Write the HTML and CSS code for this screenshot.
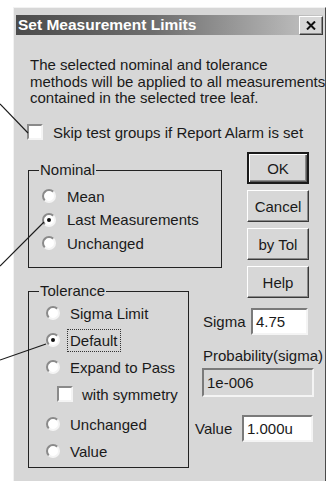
FILE: index.html
```html
<!DOCTYPE html>
<html lang="en">
	<head>
		<meta charset="UTF-8" />
		<meta name="viewport" content="width=device-width, initial-scale=1.0" />
		<title>Set Measurement Limits</title>
		<link rel="stylesheet" href="styles.css">
	</head>
	<body>
		<div class="page">
			<!-- callout lines from the manual page -->
			<svg class="callouts" width="329" height="483" viewBox="0 0 329 483">
				<line x1="0" y1="104" x2="28" y2="133" />
				<line x1="0" y1="266" x2="44" y2="222" />
				<line x1="0" y1="360" x2="46" y2="344" />
			</svg>

			<div class="dialog">
				<div class="titlebar">
					<span class="title">Set Measurement Limits</span>
					<span class="close">
						<svg width="10" height="9" viewBox="0 0 10 9">
							<path d="M1 0.5 L9 8.5 M9 0.5 L1 8.5" />
						</svg>
					</span>
				</div>

				<p class="intro">
					The selected nominal and tolerance<br>
					methods will be applied to all measurements<br>
					contained in the selected tree leaf.
				</p>

				<div class="skip">
					<span class="checkbox"></span>
					<span>Skip test groups if Report Alarm is set</span>
				</div>

				<div class="main">
					<div class="left">
						<fieldset class="group nominal">
							<legend>Nominal</legend>
							<div class="option"><span class="radio"></span>Mean</div>
							<div class="option"><span class="radio checked"></span>Last Measurements</div>
							<div class="option"><span class="radio"></span>Unchanged</div>
						</fieldset>

						<fieldset class="group tolerance">
							<legend>Tolerance</legend>
							<div class="option"><span class="radio"></span>Sigma Limit</div>
							<div class="option"><span class="radio checked"></span><span class="focus">Default</span></div>
							<div class="option"><span class="radio"></span>Expand to Pass</div>
							<div class="option sub"><span class="checkbox"></span>with symmetry</div>
							<div class="option gap"><span class="radio"></span>Unchanged</div>
							<div class="option"><span class="radio"></span>Value</div>
						</fieldset>
					</div>

					<div class="right">
						<div class="buttons">
							<button class="btn default">OK</button>
							<button class="btn">Cancel</button>
							<button class="btn">by Tol</button>
							<button class="btn">Help</button>
						</div>

						<div class="field sigma">
							<span class="label">Sigma</span>
							<span class="input">4.75</span>
						</div>

						<div class="prob-label">Probability(sigma)</div>
						<div class="input disabled prob">1e-006</div>

						<div class="field value">
							<span class="label">Value</span>
							<span class="input">1.000u</span>
						</div>
					</div>
				</div>
			</div>
		</div>
	</body>
</html>
```

FILE: styles.css
```css
/* Old Windows dialog, scanned into a manual */
body {
	margin: 0;
	padding: 0;
	background-color: #fff;
	font-family: "Liberation Sans", Arial, sans-serif;
	font-size: 15px;
	color: #1a1a1a;
}
.page {
	position: relative;
	width: 329px;
	height: 483px;
	overflow: hidden;
}
.callouts {
	position: absolute;
	top: 0;
	left: 0;
	z-index: 2;
}
.callouts line {
	stroke: #1a1a1a;
	stroke-width: 1.1;
}
.dialog {
	margin: 7px 0 0 13px;
	width: 313px;
	height: 474px;
	box-sizing: border-box;
	padding: 7px 2px 0 2px;
	background-color: #d7d7d7;
	border: 1px solid #f2f2f2;
	border-right-color: #4a4a4a;
	border-bottom: none;
}
.titlebar {
	height: 20px;
	display: flex;
	align-items: center;
	justify-content: space-between;
	padding: 0 0 0 2px;
	background: linear-gradient(to right, #4b4b4b 0%, #6e6e6e 45%, #c6c6c6 100%);
}
.title {
	color: #fff;
	font-weight: bold;
	font-size: 15.5px;
}
.close {
	width: 24px;
	height: 19px;
	box-sizing: border-box;
	display: flex;
	align-items: center;
	justify-content: center;
	background-color: #d7d7d7;
	border: 1px solid;
	border-color: #fff #3a3a3a #3a3a3a #fff;
	box-shadow: inset -1px -1px #8a8a8a;
}
.close path {
	stroke: #111;
	stroke-width: 2;
	fill: none;
}
.intro {
	margin: 22px 0 0 0;
	padding-left: 14px;
	line-height: 16.5px;
	white-space: nowrap; /* the long line runs right to the edge */
}
.skip {
	margin-top: 17.5px;
	padding-left: 11px;
	height: 16px;
	display: flex;
	align-items: center;
	gap: 10px;
}
.checkbox {
	width: 16px;
	height: 16px;
	box-sizing: border-box;
	flex: none;
	background-color: #fff;
	border: 2px solid;
	border-color: #8a8a8a #f4f4f4 #f4f4f4 #8a8a8a;
}
.main {
	margin-top: 12px;
	display: grid;
	grid-template-columns: 174px 1fr;
}
.left {
	padding-left: 12px;
}
.group {
	margin: 0;
	padding: 0;
	border: 1px solid #222;
	box-sizing: border-box;
}
.group legend {
	margin-left: 10px;
	padding: 0 1px;
	line-height: 16.5px;
}
.option {
	display: flex;
	align-items: center;
}
.radio {
	width: 14px;
	height: 14px;
	box-sizing: border-box;
	flex: none;
	border-radius: 50%;
	background-color: #fff;
	border: 2px solid;
	border-color: #8a8a8a #f4f4f4 #f4f4f4 #8a8a8a;
	display: flex;
	align-items: center;
	justify-content: center;
}
.radio.checked::after {
	content: "";
	width: 4px;
	height: 4px;
	border-radius: 50%;
	background-color: #111;
}
.nominal {
	width: 194px;
	margin-top: 10px;
	padding: 0 0 12px 0;
}
.nominal .option {
	height: 23.5px;
	padding-left: 13px;
	gap: 11px;
}
.nominal .option:first-of-type {
	margin-top: 6px;
}
.tolerance {
	width: 161px;
	margin-top: 15px;
	padding: 0 0 2.5px 0;
}
.tolerance .option {
	height: 27px;
	padding-left: 17px;
	gap: 10px;
}
.tolerance .option.sub {
	padding-left: 28px;
	gap: 9px;
}
.tolerance .option.gap {
	margin-top: 3px;
}
.focus {
	outline: 1px dotted #333;
	outline-offset: 2px;
}
.buttons {
	display: flex;
	flex-direction: column;
	gap: 6px;
	padding-left: 57px;
}
.btn {
	width: 62px;
	height: 32px;
	padding: 0;
	font-family: inherit;
	font-size: 15px;
	color: #1a1a1a;
	background-color: #d7d7d7;
	border: 1px solid;
	border-color: #fff #3a3a3a #3a3a3a #fff;
	box-shadow: inset -1px -1px #8a8a8a;
}
.btn.default {
	border: 2px solid #1a1a1a;
	box-shadow: inset 1px 1px #fff, inset -1px -1px #5a5a5a, inset -2px -2px #8a8a8a;
}
.input {
	display: flex;
	align-items: center;
	box-sizing: border-box;
	padding-left: 3px;
	background-color: #fff;
	border: 2px solid;
	border-color: #7a7a7a #f4f4f4 #f4f4f4 #7a7a7a;
}
.input.disabled {
	background-color: #d7d7d7;
}
.field {
	display: flex;
	align-items: center;
}
.sigma {
	margin-top: 10px;
	padding-left: 13px;
}
.sigma .label {
	width: 48px;
}
.sigma .input {
	width: 57px;
	height: 27px;
}
.prob-label {
	margin-top: 13px;
	padding-left: 13px;
	line-height: 16px;
}
.prob {
	margin: 4px 0 0 12px;
	width: 112px;
	height: 29px;
}
.value {
	margin-top: 18px;
	padding-left: 5px;
}
.value .label {
	width: 47px;
}
.value .input {
	width: 71px;
	height: 27px;
}
```
